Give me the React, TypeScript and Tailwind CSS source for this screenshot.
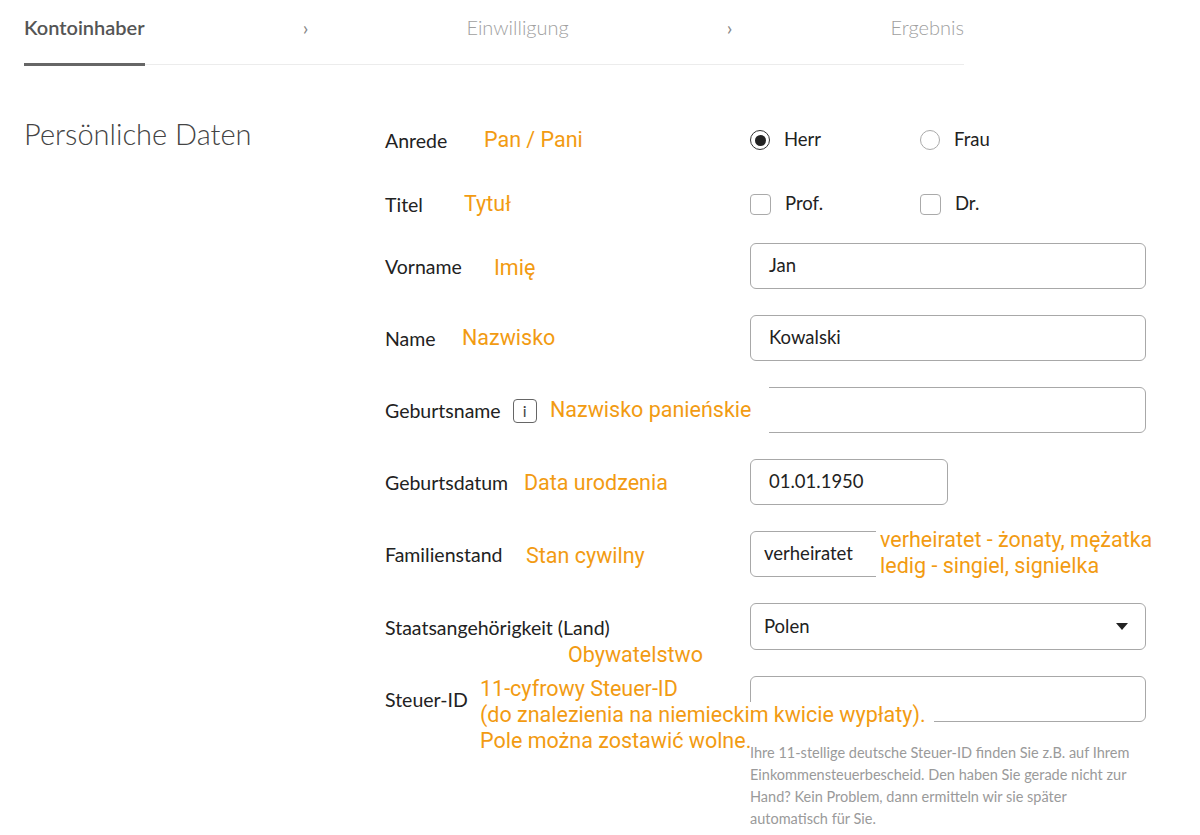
import React from "react";

const ORANGE = "text-[#f29b12]";
const ann = `font-['Roboto',sans-serif] ${ORANGE} text-[21.5px] leading-[26px] bg-white whitespace-nowrap`;

function Row({
  label,
  children,
  h = "h-[46px]",
  mb = "mb-[26px]",
  extra,
}: {
  label: React.ReactNode;
  children?: React.ReactNode;
  h?: string;
  mb?: string;
  extra?: React.ReactNode;
}) {
  return (
    <div className={`relative flex items-center ${h} ${mb}`}>
      <div className="w-[365px] shrink-0 flex items-center pt-[2px] text-[19.5px] text-[#222]">{label}</div>
      <div className="w-[396px] shrink-0">{children}</div>
      {extra}
    </div>
  );
}

function Input({ value, w = "w-[396px]" }: { value?: string; w?: string }) {
  return (
    <div className={`${w} h-[46px] rounded-[6px] border border-[#a8a8a8] flex items-center px-[18px] text-[18.5px] text-[#222]`}>
      {value}
    </div>
  );
}

export default function App() {
  return (
    <div className="w-[1200px] h-[835px] bg-white font-['Lato',sans-serif] overflow-hidden">
      <div className="pl-[24px]">
        {/* Steps */}
        <div className="w-[940px] h-[65px] relative border-b border-[#ececec] flex items-start justify-between pt-[12px] text-[20px]">
          <div className="relative h-full">
            <span className="text-[#555] font-semibold">Kontoinhaber</span>
            <div className="absolute left-0 right-0 -bottom-[2px] h-[3px] bg-[#666]" />
          </div>
          <span className="text-[#888]">›</span>
          <span className="text-[#a0a0a0] font-light">Einwilligung</span>
          <span className="text-[#888]">›</span>
          <span className="text-[#a0a0a0] font-light">Ergebnis</span>
        </div>

        <div className="flex">
          <div className="w-[361px] shrink-0 pt-[50px]">
            <h1 className="text-[29px] text-[#444] font-light leading-[38px]">Persönliche Daten</h1>
          </div>

          <div className="pt-[53px]">
            <Row
              label="Anrede"
              h="h-[44px]"
              mb="mb-[20px]"
              extra={<span className={`absolute left-[99px] top-[9px] ${ann}`}>Pan / Pani</span>}
            >
              <div className="flex items-center text-[18.5px] text-[#222]">
                <div className="w-[170px] flex items-center gap-[14px]">
                  <div className="w-[20px] h-[20px] rounded-full border-[1.5px] border-[#333] flex items-center justify-center">
                    <div className="w-[11px] h-[11px] rounded-full bg-[#222]" />
                  </div>
                  Herr
                </div>
                <div className="flex items-center gap-[14px]">
                  <div className="w-[20px] h-[20px] rounded-full border border-[#aaa]" />
                  Frau
                </div>
              </div>
            </Row>
            <Row
              label="Titel"
              h="h-[44px]"
              mb="mb-[17px]"
              extra={<span className={`absolute left-[79px] top-[9px] ${ann}`}>Tytuł</span>}
            >
              <div className="flex items-center text-[18.5px] text-[#222]">
                <div className="w-[170px] flex items-center gap-[14px]">
                  <div className="w-[21px] h-[21px] rounded-[4px] border border-[#aaa]" />
                  Prof.
                </div>
                <div className="flex items-center gap-[14px]">
                  <div className="w-[21px] h-[21px] rounded-[4px] border border-[#aaa]" />
                  Dr.
                </div>
              </div>
            </Row>
            <Row label="Vorname" extra={<span className={`absolute left-[109px] top-[12px] ${ann}`}>Imię</span>}>
              <Input value="Jan" />
            </Row>
            <Row label="Name" extra={<span className={`absolute left-[77px] top-[10px] ${ann}`}>Nazwisko</span>}>
              <Input value="Kowalski" />
            </Row>
            <Row
              label={
                <>
                  Geburtsname
                  <span className="ml-[12px] w-[24px] h-[24px] rounded-[4px] border border-[#666] flex items-center justify-center text-[16px] text-[#444]">
                    i
                  </span>
                </>
              }
              extra={
                <span
                  className={`absolute left-[165px] -top-[2px] h-[50px] flex items-center pr-[18px] ${ann}`}
                >
                  Nazwisko panieńskie
                </span>
              }
            >
              <Input />
            </Row>
            <Row
              label="Geburtsdatum"
              extra={<span className={`absolute left-[139px] top-[11px] ${ann}`}>Data urodzenia</span>}
            >
              <Input value="01.01.1950" w="w-[198px]" />
            </Row>
            <Row
              label="Familienstand"
              extra={
                <>
                  <span className={`absolute left-[141px] top-[12px] ${ann}`}>Stan cywilny</span>
                  <div className="absolute left-[491px] -top-[4px] flex flex-col items-start">
                    <span className={`pl-[4px] ${ann}`}>verheiratet - żonaty, mężatka</span>
                    <span className={`pl-[4px] ${ann}`}>ledig - singiel, signielka</span>
                  </div>
                </>
              }
            >
              <div className="w-[198px] h-[46px] rounded-[6px] border border-[#a8a8a8] flex items-center px-[13px] text-[18.5px] text-[#222]">
                verheiratet
              </div>
            </Row>
            <Row
              label="Staatsangehörigkeit (Land)"
              h="h-[47px]"
              extra={<span className={`absolute left-[183px] top-[39px] ${ann}`}>Obywatelstwo</span>}
            >
              <div className="w-[396px] h-[47px] rounded-[6px] border border-[#a8a8a8] flex items-center justify-between pl-[13px] pr-[17px] text-[18.5px] text-[#222]">
                Polen
                <svg width="12" height="7" viewBox="0 0 12 7">
                  <path d="M0 0 L12 0 L6 7 Z" fill="#222" />
                </svg>
              </div>
            </Row>
            <Row
              label="Steuer-ID"
              mb="mb-[0px]"
              extra={
                <div className="absolute left-[95px] top-0 flex flex-col items-start">
                  <span className={`${ann} leading-[25px]`}>11-cyfrowy Steuer-ID</span>
                  <span className={`${ann} leading-[25px] pr-[8px]`}>(do znalezienia na niemieckim kwicie wypłaty).</span>
                  <span className={`${ann} leading-[25px]`}>Pole można zostawić wolne.</span>
                </div>
              }
            >
              <Input />
            </Row>
            <div className="flex">
              <div className="w-[365px] shrink-0" />
              <p className="w-[420px] pt-[20px] text-[14.5px] leading-[22px] text-[#9a9a9a] whitespace-nowrap">
                Ihre 11-stellige deutsche Steuer-ID finden Sie z.B. auf Ihrem
                <br />
                Einkommensteuerbescheid. Den haben Sie gerade nicht zur
                <br />
                Hand? Kein Problem, dann ermitteln wir sie später
                <br />
                automatisch für Sie.
              </p>
            </div>
          </div>
        </div>
      </div>
    </div>
  );
}
